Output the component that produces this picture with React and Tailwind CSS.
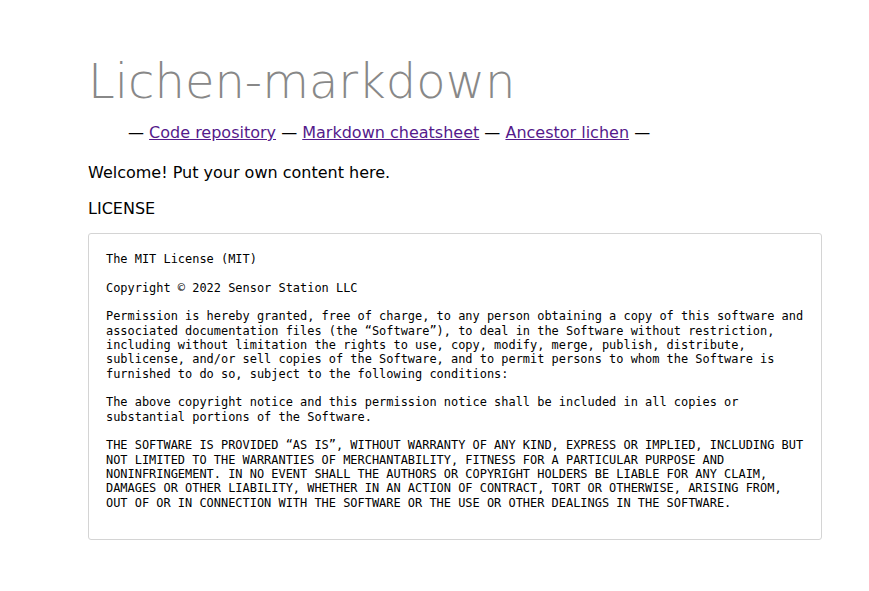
export default function App() {
  const license = `The MIT License (MIT)

Copyright © 2022 Sensor Station LLC

Permission is hereby granted, free of charge, to any person obtaining a copy of this software and
associated documentation files (the “Software”), to deal in the Software without restriction,
including without limitation the rights to use, copy, modify, merge, publish, distribute,
sublicense, and/or sell copies of the Software, and to permit persons to whom the Software is
furnished to do so, subject to the following conditions:

The above copyright notice and this permission notice shall be included in all copies or
substantial portions of the Software.

THE SOFTWARE IS PROVIDED “AS IS”, WITHOUT WARRANTY OF ANY KIND, EXPRESS OR IMPLIED, INCLUDING BUT
NOT LIMITED TO THE WARRANTIES OF MERCHANTABILITY, FITNESS FOR A PARTICULAR PURPOSE AND
NONINFRINGEMENT. IN NO EVENT SHALL THE AUTHORS OR COPYRIGHT HOLDERS BE LIABLE FOR ANY CLAIM,
DAMAGES OR OTHER LIABILITY, WHETHER IN AN ACTION OF CONTRACT, TORT OR OTHERWISE, ARISING FROM,
OUT OF OR IN CONNECTION WITH THE SOFTWARE OR THE USE OR OTHER DEALINGS IN THE SOFTWARE.
`;
  return (
    <div className="min-h-[591px] bg-white pl-[88px] pr-[47px] pt-[53px] text-black font-['DejaVu_Sans',sans-serif]">
      <h1 className="h-[56px] text-[48px] leading-[56px] font-extralight text-[#888] font-['DejaVu_Sans',sans-serif]">
        Lichen-markdown
      </h1>
      <nav className="mt-[14px] pl-[40px] text-[16px] leading-[20px]">
        — <a href="#" className="text-[#551a8b] underline">Code repository</a> —{" "}
        <a href="#" className="text-[#551a8b] underline">Markdown cheatsheet</a> —{" "}
        <a href="#" className="text-[#551a8b] underline">Ancestor lichen</a> —
      </nav>
      <p className="mt-[20px] text-[16px] leading-[20px]">Welcome! Put your own content here.</p>
      <p className="mt-[16px] text-[16px] leading-[20px]">LICENSE</p>
      <pre className="mt-[14px] rounded-[3px] border border-[#d4d4d4] pl-[17px] pr-[16px] pt-[18px] pb-[15px] text-[11.95px] leading-[14.33px] font-['DejaVu_Sans_Mono',monospace] whitespace-pre">
        {license + "\n"}
      </pre>
    </div>
  );
}
